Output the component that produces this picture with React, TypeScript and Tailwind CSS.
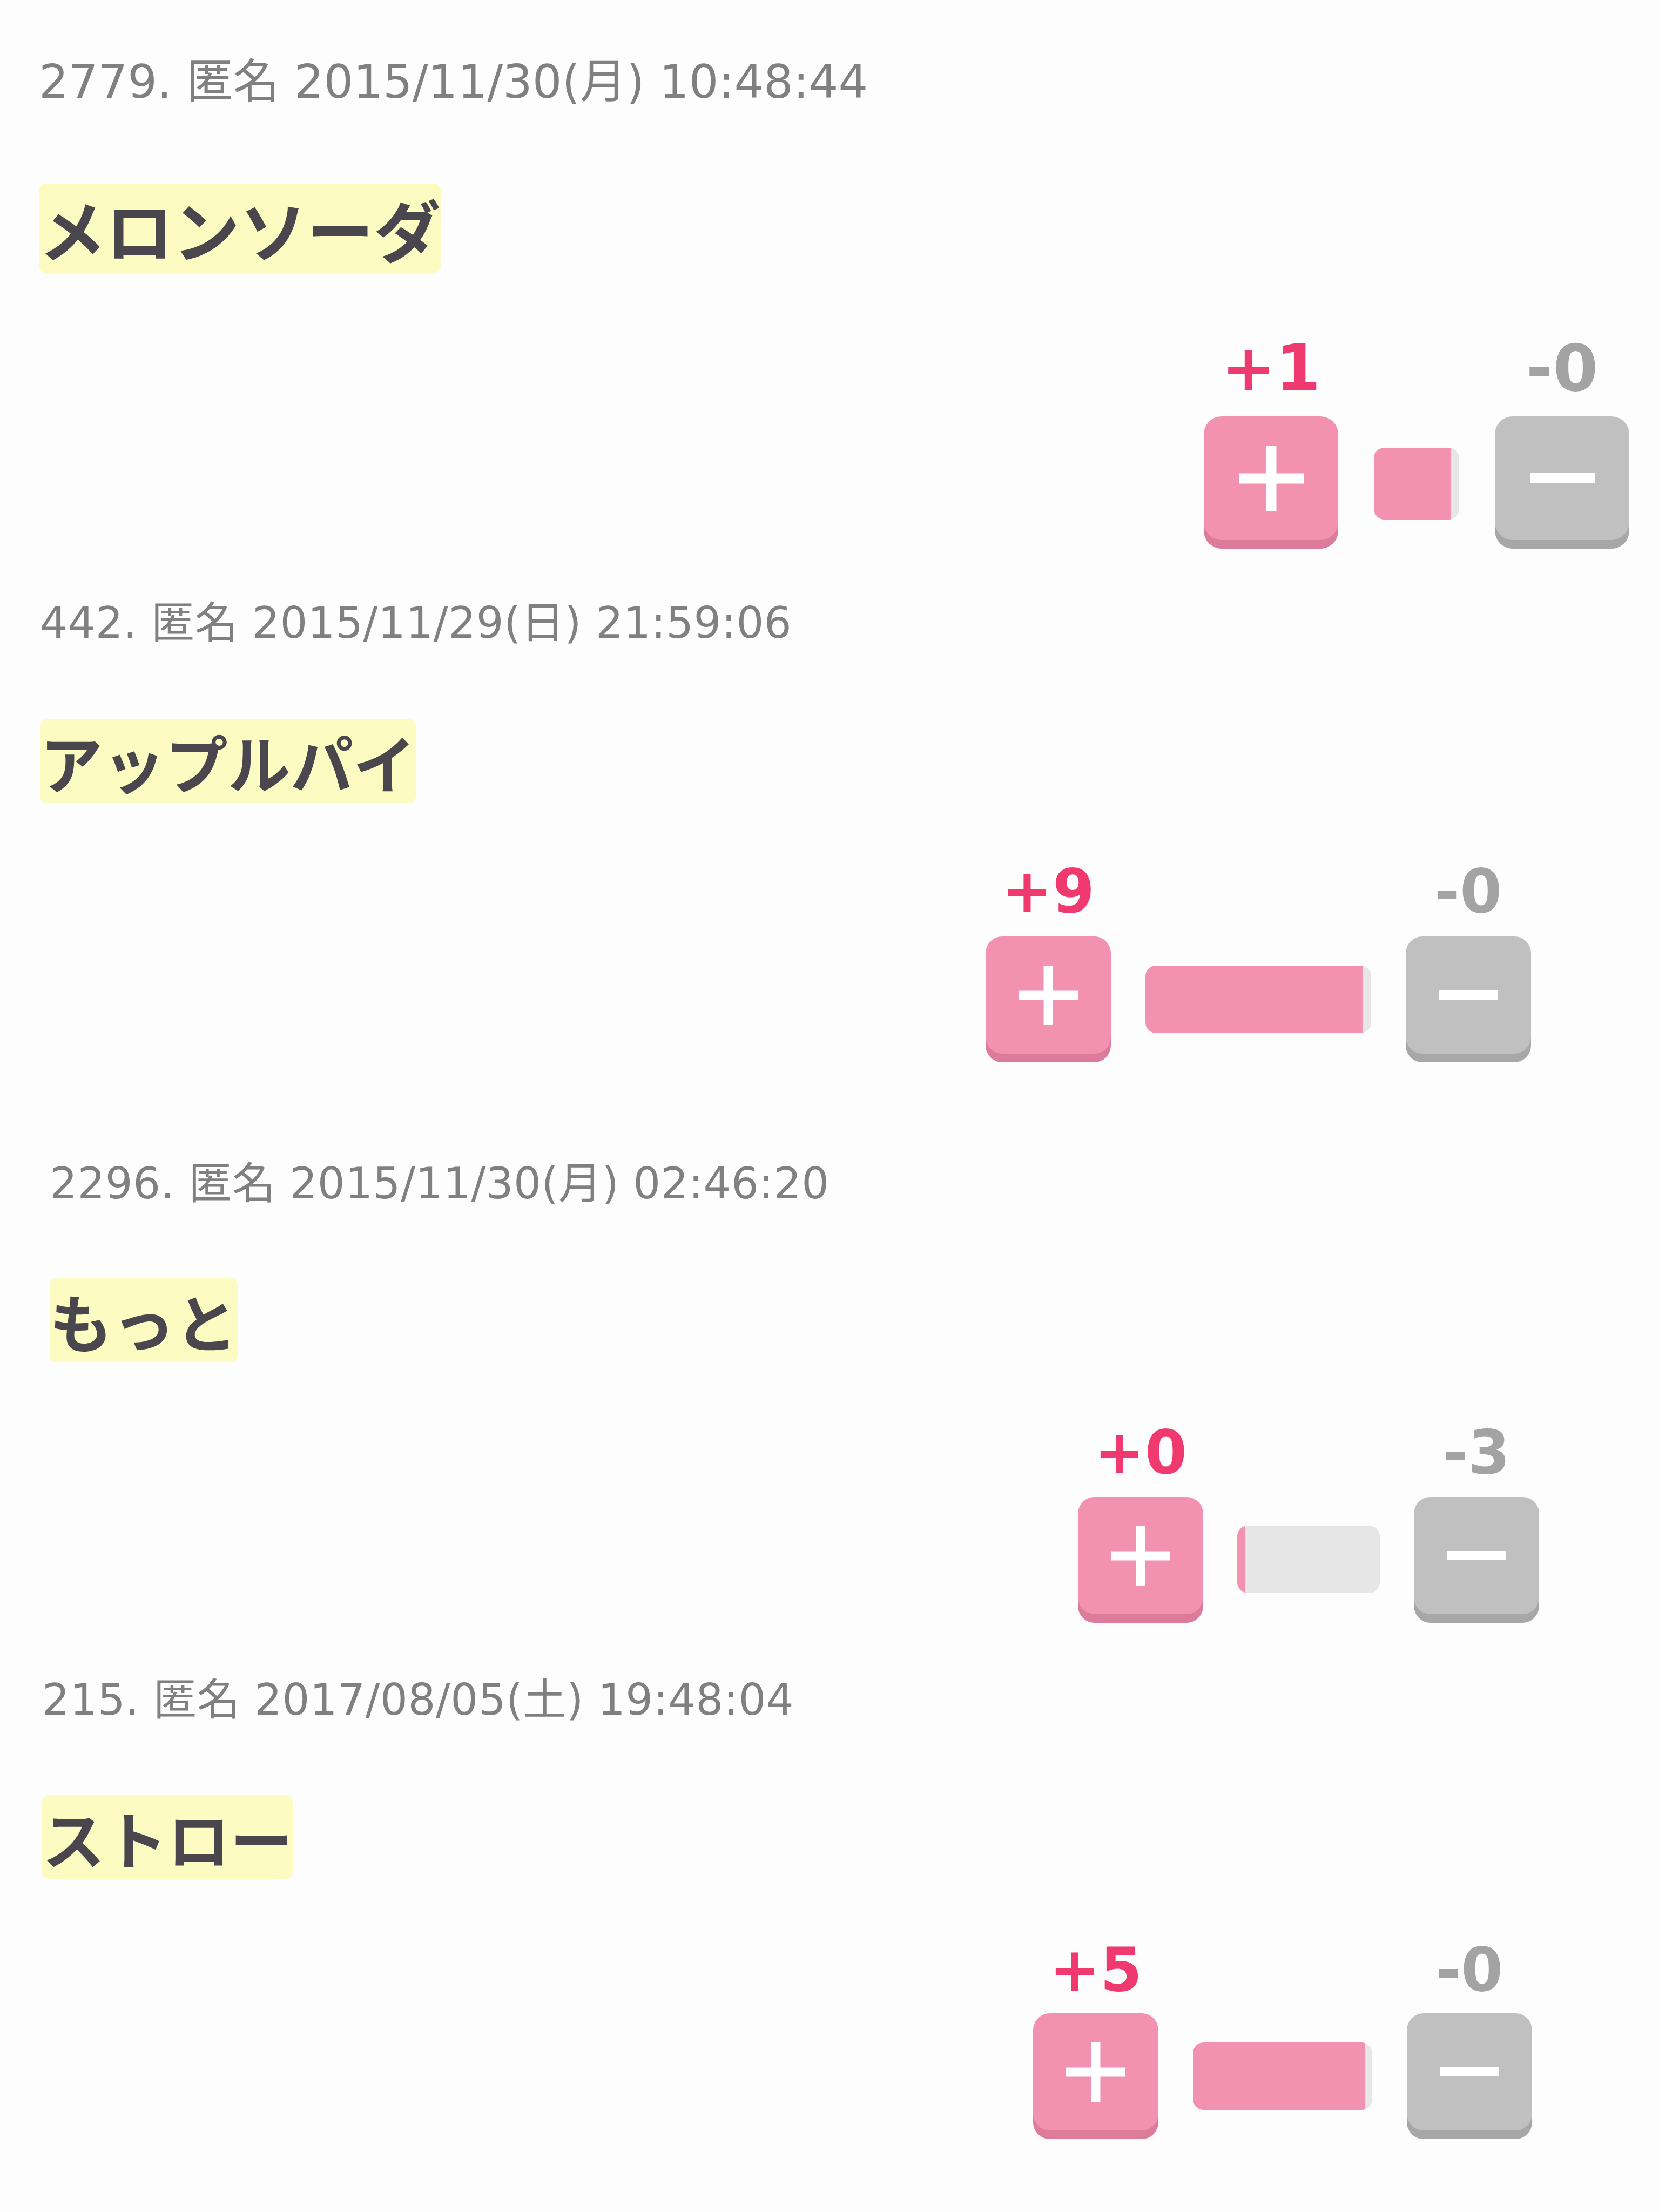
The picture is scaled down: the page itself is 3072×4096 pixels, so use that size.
import React from "react";

type Post = {
  wrap: string;
  header: string;
  headerText: string;
  title: string;
  titleText: string;
  row: string;
  col: string;
  label: string;
  btn: string;
  bar: string;
  pinkW: number;
  plus: number;
  thick: number;
  up: string;
  down: string;
};

const posts: Post[] = [
  {
    wrap: "pl-[72px] pt-[108px]",
    header: "text-[86px] tracking-[0px]",
    headerText: "2779. 匿名 2015/11/30(月) 10:48:44",
    title: "mt-[146px] text-[124px] leading-[165px]",
    titleText: "メロンソーダ",
    row: "mt-[117px] pr-[55px] gap-[66px]",
    col: "w-[249px]",
    label: "text-[120px]",
    btn: "w-[249px] h-[229px] mt-[29px] rounded-[33px]",
    bar: "mt-[207px] h-[133px] w-[158px]",
    pinkW: 142,
    plus: 120,
    thick: 19,
    up: "+1",
    down: "-0",
  },
  {
    wrap: "pl-[74px] pt-[98px]",
    header: "text-[80px] tracking-[0.5px]",
    headerText: "442. 匿名 2015/11/29(日) 21:59:06",
    title: "mt-[138px] text-[116px] leading-[155px]",
    titleText: "アップルパイ",
    row: "mt-[107px] pr-[237px] gap-[64px]",
    col: "w-[232px]",
    label: "text-[112px]",
    btn: "w-[232px] h-[217px] mt-[28px] rounded-[31px]",
    bar: "mt-[194px] h-[125px] w-[418px]",
    pinkW: 403,
    plus: 110,
    thick: 17,
    up: "+9",
    down: "-0",
  },
  {
    wrap: "pl-[92px] pt-[185px]",
    header: "text-[80px] tracking-[0.5px]",
    headerText: "2296. 匿名 2015/11/30(月) 02:46:20",
    title: "mt-[135px] text-[116px] leading-[155px]",
    titleText: "もっと",
    row: "mt-[111px] pr-[222px] gap-[63px]",
    col: "w-[232px]",
    label: "text-[112px]",
    btn: "w-[232px] h-[217px] mt-[27px] rounded-[31px]",
    bar: "mt-[192px] h-[125px] w-[264px]",
    pinkW: 15,
    plus: 110,
    thick: 17,
    up: "+0",
    down: "-3",
  },
  {
    wrap: "pl-[78px] pt-[103px]",
    header: "text-[80px] tracking-[0.5px]",
    headerText: "215. 匿名 2017/08/05(土) 19:48:04",
    title: "mt-[136px] text-[116px] leading-[155px]",
    titleText: "ストロー",
    row: "mt-[112px] pr-[235px] gap-[64px]",
    col: "w-[232px]",
    label: "text-[112px]",
    btn: "w-[232px] h-[217px] mt-[25px] rounded-[31px]",
    bar: "mt-[191px] h-[125px] w-[332px]",
    pinkW: 319,
    plus: 110,
    thick: 17,
    up: "+5",
    down: "-0",
  },
];

function PlusIcon({ size, thick }: { size: number; thick: number }) {
  const o = (size - thick) / 2;
  return (
    <svg width={size} height={size} viewBox={`0 0 ${size} ${size}`}>
      <rect x={0} y={o} width={size} height={thick} fill="#ffffff" />
      <rect x={o} y={0} width={thick} height={size} fill="#ffffff" />
    </svg>
  );
}

function MinusIcon({ size, thick }: { size: number; thick: number }) {
  return (
    <svg width={size} height={thick} viewBox={`0 0 ${size} ${thick}`}>
      <rect x={0} y={0} width={size} height={thick} fill="#ffffff" />
    </svg>
  );
}

function PostBlock({ p }: { p: Post }) {
  return (
    <div className={p.wrap}>
      <div
        className={`${p.header} leading-none whitespace-nowrap text-[#808080] font-['DejaVu_Sans','Noto_Sans_CJK_JP',sans-serif]`}
      >
        {p.headerText}
      </div>
      <div
        className={`${p.title} w-fit rounded-[12px] bg-[#fcfbc2] font-bold text-[#49474d] whitespace-nowrap font-['Noto_Sans_CJK_JP',sans-serif]`}
      >
        {p.titleText}
      </div>
      <div className={`${p.row} flex justify-end items-start`}>
        <div className={`${p.col} flex flex-col items-center`}>
          <div
            className={`${p.label} leading-none font-bold text-[#f0396f] whitespace-nowrap font-['DejaVu_Sans',sans-serif]`}
          >
            {p.up}
          </div>
          <div
            className={`${p.btn} mb-[16px] flex items-center justify-center bg-[#f291b0] shadow-[0_16px_0_#dc7b9a]`}
          >
            <PlusIcon size={p.plus} thick={p.thick} />
          </div>
        </div>
        <div className={`${p.bar} rounded-[20px] bg-[#e6e6e6] overflow-hidden flex`}>
          <div className="h-full bg-[#f291b0]" style={{ width: p.pinkW }} />
        </div>
        <div className={`${p.col} flex flex-col items-center`}>
          <div
            className={`${p.label} leading-none font-bold text-[#a3a3a3] whitespace-nowrap font-['DejaVu_Sans',sans-serif]`}
          >
            {p.down}
          </div>
          <div
            className={`${p.btn} mb-[16px] flex items-center justify-center bg-[#c0c0c0] shadow-[0_16px_0_#a7a7a7]`}
          >
            <MinusIcon size={p.plus} thick={p.thick} />
          </div>
        </div>
      </div>
    </div>
  );
}

export default function App() {
  return (
    <div className="w-[3072px] min-h-[4096px] bg-[#fdfdfd]">
      {posts.map((p, i) => (
        <PostBlock key={i} p={p} />
      ))}
    </div>
  );
}
